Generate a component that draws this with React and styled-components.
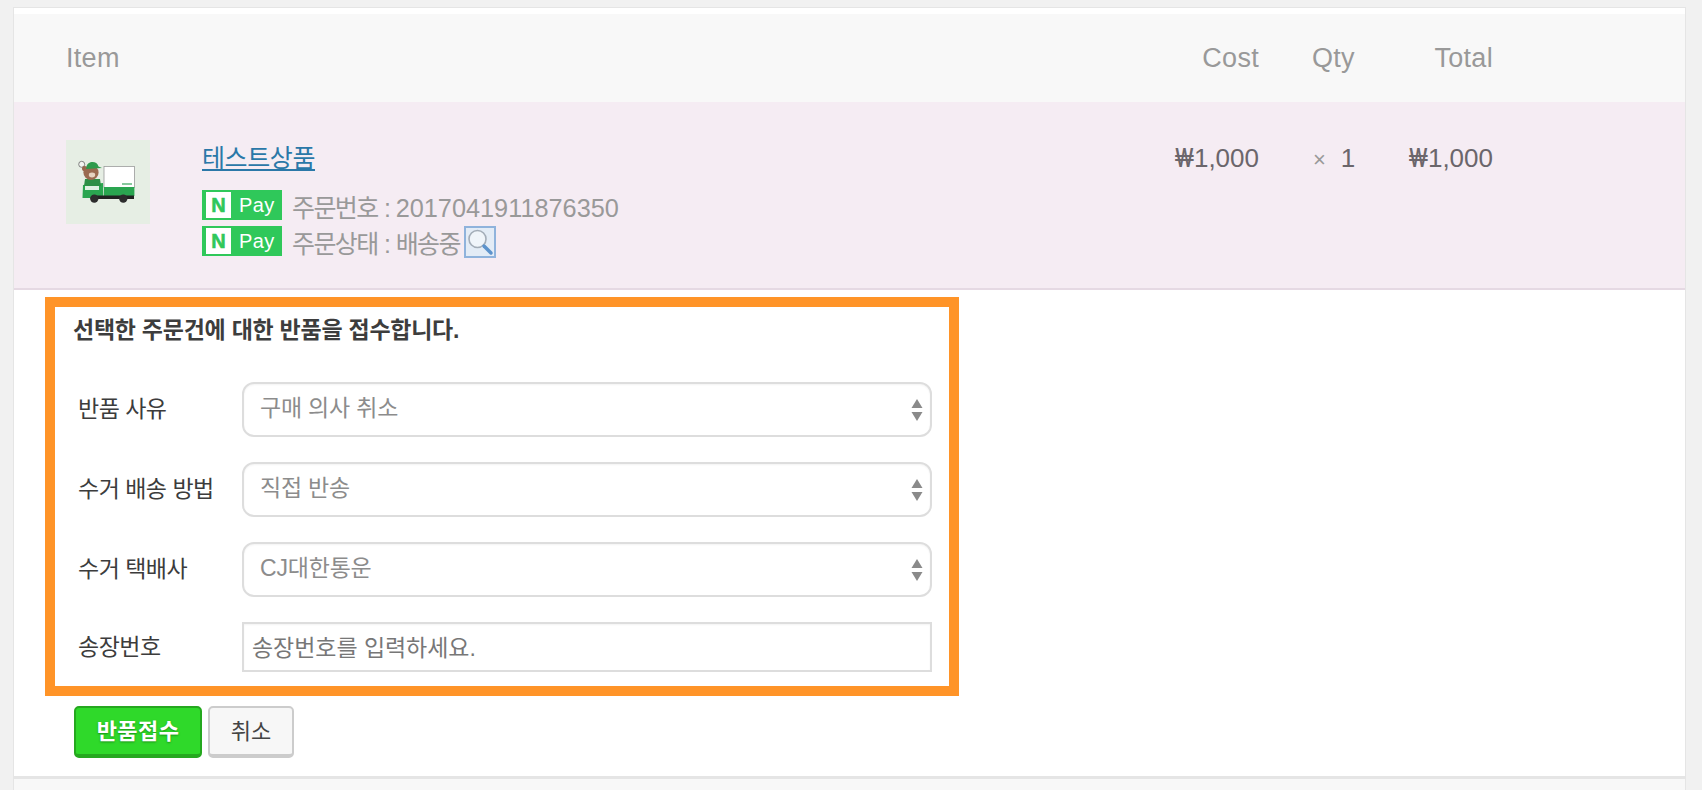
import React from 'react'
import styled, { createGlobalStyle } from 'styled-components'

const GlobalStyle = createGlobalStyle`
  html, body {
    margin: 0;
    height: 790px;
    overflow: hidden;
    background: #f1f1f1;
  }
  * { box-sizing: border-box; }
  body, input, select, button {
    font-family: "Liberation Sans", "Noto Sans CJK KR", sans-serif;
  }
`

const Page = styled.div`
  padding: 7px 16px 0 13px;
`

const Card = styled.div`
  background: #fff;
  border: 1px solid #e5e5e5;
  border-bottom: 0;
  padding-top: 6px;
`

const gridRow = `
  display: grid;
  grid-template-columns: 1fr 90px 96px 138px;
  padding: 0 192px 0 52px;
`

const HeadRow = styled.div`
  ${gridRow}
  height: 88px;
  align-items: center;
  background: #f8f8f8;
  color: #999;
  font-size: 27px;
  letter-spacing: 0.3px;
`

const HeadCell = styled.div`
  text-align: ${p => (p.$right ? 'right' : 'left')};
  padding-left: ${p => (p.$qty ? '53px' : '0')};
  white-space: nowrap;
`

const ItemRow = styled.div`
  ${gridRow}
  height: 188px;
  padding-top: 38px;
  background: #f5ecf3;
  border-bottom: 2px solid #e5d9e3;
`

const ItemCell = styled.div`
  display: flex;
  gap: 52px;
`

const Thumb = styled.svg`
  display: block;
  width: 84px;
  height: 84px;
  flex: none;
`

const Info = styled.div`
  display: flex;
  flex-direction: column;
`

const Title = styled.a`
  display: block;
  width: fit-content;
  height: 36px;
  margin-bottom: 14px;
  font-size: 25px;
  line-height: 37px;
  letter-spacing: -0.4px;
  color: #2a78a8;
  text-decoration: underline;
`

const MetaLine = styled.div`
  display: flex;
  align-items: center;
  height: 30px;
  margin-bottom: 6px;
  color: #999;
  font-size: 25px;
  letter-spacing: -1.6px;
  word-spacing: 1px;
  white-space: pre;
`

const MetaText = styled.span`
  padding-top: 2px;
`

const Digits = styled.span`
  font-size: 25.3px;
  letter-spacing: 0;
`

const Badge = styled.span`
  display: flex;
  align-items: center;
  width: 80px;
  height: 30px;
  padding-left: 4px;
  margin-right: 10px;
  background: #2fc85a;
  color: #fff;
  font-size: 20px;
  letter-spacing: 0.4px;
`

const BadgeN = styled.span`
  display: flex;
  align-items: center;
  justify-content: center;
  width: 25px;
  height: 26px;
  margin-right: 8px;
  background: #fff;
  color: #2fc85a;
  font-size: 20px;
  font-weight: 700;
  letter-spacing: 0;
  -webkit-text-stroke: 0.6px #2fc85a;
`

const Amount = styled.div`
  color: #6b666b;
  font-size: 26px;
  line-height: 36px;
  text-align: ${p => (p.$right ? 'right' : 'left')};
  padding-left: ${p => (p.$qty ? '54px' : '0')};
  white-space: nowrap;
`

const Won = styled.span`
  font-family: Roboto, "Liberation Sans", sans-serif;
  font-size: 26px;
`

const Times = styled.span`
  color: #999;
  font-size: 22px;
  margin-right: 15px;
`

const Lens = styled.svg`
  display: block;
  width: 32px;
  height: 32px;
  margin: 2px 0 0 4px;
  flex: none;
`

const FormSection = styled.div`
  height: 486px;
  padding: 7px 0 0 31px;
`

const FormBox = styled.div`
  width: 914px;
  height: 399px;
  border: 10px solid #ff9428;
  padding: 0 17px 0 18px;
`

const FormTitle = styled.div`
  height: 44px;
  margin-bottom: 31px;
  color: #3d3d3d;
  font-size: 23px;
  font-weight: 700;
  line-height: 47px;
  letter-spacing: -0.25px;
  white-space: nowrap;
`

const Fields = styled.div`
  display: grid;
  grid-template-columns: 164px 1fr;
  grid-auto-rows: 55px;
  row-gap: 25px;
  padding-left: 5px;
`

const Label = styled.label`
  align-self: center;
  padding-bottom: ${p => (p.$last ? '10px' : '5px')};
  color: #3c3c3c;
  font-size: 23px;
  letter-spacing: -0.5px;
  white-space: nowrap;
`

const SelectWrap = styled.div`
  position: relative;
`

const Select = styled.select`
  appearance: none;
  width: 100%;
  height: 100%;
  padding: 0 40px 4px 16px;
  background: #fff;
  border: 2px solid #ddd;
  border-radius: 12px;
  box-shadow: inset 0 1px 2px rgba(0, 0, 0, 0.05);
  color: #8c8c8c;
  font-size: 23px;
  letter-spacing: -0.2px;
`

const Arrows = styled.svg`
  position: absolute;
  right: 9px;
  top: 17px;
  width: 12px;
  height: 22px;
  pointer-events: none;
`

const TextInput = styled.input`
  width: 100%;
  height: 50px;
  padding: 2px 8px 0;
  background: #fff;
  border: 2px solid #ddd;
  border-radius: 0;
  box-shadow: inset 0 1px 2px rgba(0, 0, 0, 0.05);
  font-size: 23px;
  letter-spacing: -0.05px;
  &::placeholder {
    color: #777;
    opacity: 1;
  }
`

const Actions = styled.div`
  display: flex;
  gap: 6px;
  margin: 10px 0 0 29px;
`

const Button = styled.button`
  height: 52px;
  width: ${p => (p.$primary ? '128px' : '86px')};
  padding: 0 0 4px;
  border-radius: 5px;
  font-size: 22px;
  border: 2px solid ${p => (p.$primary ? '#25a81f' : '#ccc')};
  border-bottom-width: 4px;
  background: ${p => (p.$primary ? '#2fd92a' : '#f7f7f7')};
  color: ${p => (p.$primary ? '#fff' : '#444')};
  font-weight: ${p => (p.$primary ? 700 : 400)};
  letter-spacing: ${p => (p.$primary ? '0.4px' : '0')};
  text-shadow: ${p => (p.$primary ? '0 1px 2px rgba(0, 80, 0, 0.5)' : 'none')};
`

const Foot = styled.div`
  height: 20px;
  background: #f8f8f8;
  border-top: 3px solid #e5e5e5;
`

function TruckThumb() {
  return (
    <Thumb viewBox="0 0 84 84">
      <rect width="84" height="84" fill="#e6eee4" />
      <g style={{ filter: 'blur(0.35px)' }}>
        <circle cx="15.7" cy="24.3" r="3" fill="#f4f6f2" stroke="#666" strokeWidth="0.8" />
        <rect x="38" y="26.4" width="30.4" height="21" fill="#fff" stroke="#9a9a9a" strokeWidth="0.8" />
        <rect x="38" y="47" width="30.4" height="9" fill="#2aa550" />
        <rect x="56" y="43.4" width="10" height="1.2" fill="#3ba55d" />
        <path d="M17 45 L37 43 L37.5 58 L16.5 58 Z" fill="#2aa550" />
        <rect x="19" y="46" width="14" height="4" fill="#dff0e2" />
        <rect x="26" y="55.5" width="42" height="3.5" fill="#222" />
        <circle cx="28.3" cy="58.6" r="4.2" fill="#2c2c2c" />
        <circle cx="57.3" cy="58.6" r="4.2" fill="#2c2c2c" />
        <path d="M19 39 H34 L35 46 H18 Z" fill="#2d8f46" />
        <circle cx="18.6" cy="28.5" r="2.6" fill="#96664c" />
        <circle cx="25" cy="32.5" r="7.6" fill="#9a6a50" />
        <ellipse cx="26" cy="35" rx="3.2" ry="2.4" fill="#e6d3c0" />
        <path d="M20.5 27 C21 21 31 20 32.5 26.5 L36 28 L20 29 Z" fill="#2f9a4c" />
      </g>
    </Thumb>
  )
}

function LensIcon() {
  return (
    <Lens viewBox="0 0 32 32">
      <rect x="1" y="1" width="30" height="30" fill="#e3ecf6" stroke="#8fb3dc" strokeWidth="2" />
      <circle cx="13.5" cy="13" r="8.5" fill="#f0f5fa" stroke="#a3adb8" strokeWidth="1.6" />
      <path d="M20 20 L27 27" stroke="#5d93cc" strokeWidth="3.5" strokeLinecap="round" />
    </Lens>
  )
}

function NPayBadge() {
  return (
    <Badge>
      <BadgeN>N</BadgeN>
      Pay
    </Badge>
  )
}

function SelectField({ label, value }) {
  return (
    <>
      <Label>{label}</Label>
      <SelectWrap>
        <Select defaultValue={value}>
          <option>{value}</option>
        </Select>
        <Arrows viewBox="0 0 12 22">
          <path d="M6 0 L11.5 9 L0.5 9 Z" fill="#8a8a8a" />
          <path d="M0.5 13 L11.5 13 L6 22 Z" fill="#8a8a8a" />
        </Arrows>
      </SelectWrap>
    </>
  )
}

export default function App() {
  return (
    <Page>
      <GlobalStyle />
      <Card>
        <HeadRow>
          <HeadCell>Item</HeadCell>
          <HeadCell $right>Cost</HeadCell>
          <HeadCell $qty>Qty</HeadCell>
          <HeadCell $right>Total</HeadCell>
        </HeadRow>
        <ItemRow>
          <ItemCell>
            <TruckThumb />
            <Info>
              <Title href="#">테스트상품</Title>
              <MetaLine>
                <NPayBadge />
                <MetaText>
                  주문번호 : <Digits>2017041911876350</Digits>
                </MetaText>
              </MetaLine>
              <MetaLine>
                <NPayBadge />
                <MetaText>주문상태 : 배송중</MetaText>
                <LensIcon />
              </MetaLine>
            </Info>
          </ItemCell>
          <Amount $right>
            <Won>₩</Won>1,000
          </Amount>
          <Amount $qty>
            <Times>×</Times>1
          </Amount>
          <Amount $right>
            <Won>₩</Won>1,000
          </Amount>
        </ItemRow>
        <FormSection>
          <FormBox>
            <FormTitle>선택한 주문건에 대한 반품을 접수합니다.</FormTitle>
            <Fields>
              <SelectField label="반품 사유" value="구매 의사 취소" />
              <SelectField label="수거 배송 방법" value="직접 반송" />
              <SelectField label="수거 택배사" value="CJ대한통운" />
              <Label $last>송장번호</Label>
              <TextInput placeholder="송장번호를 입력하세요." />
            </Fields>
          </FormBox>
          <Actions>
            <Button $primary>반품접수</Button>
            <Button>취소</Button>
          </Actions>
        </FormSection>
        <Foot />
      </Card>
    </Page>
  )
}
